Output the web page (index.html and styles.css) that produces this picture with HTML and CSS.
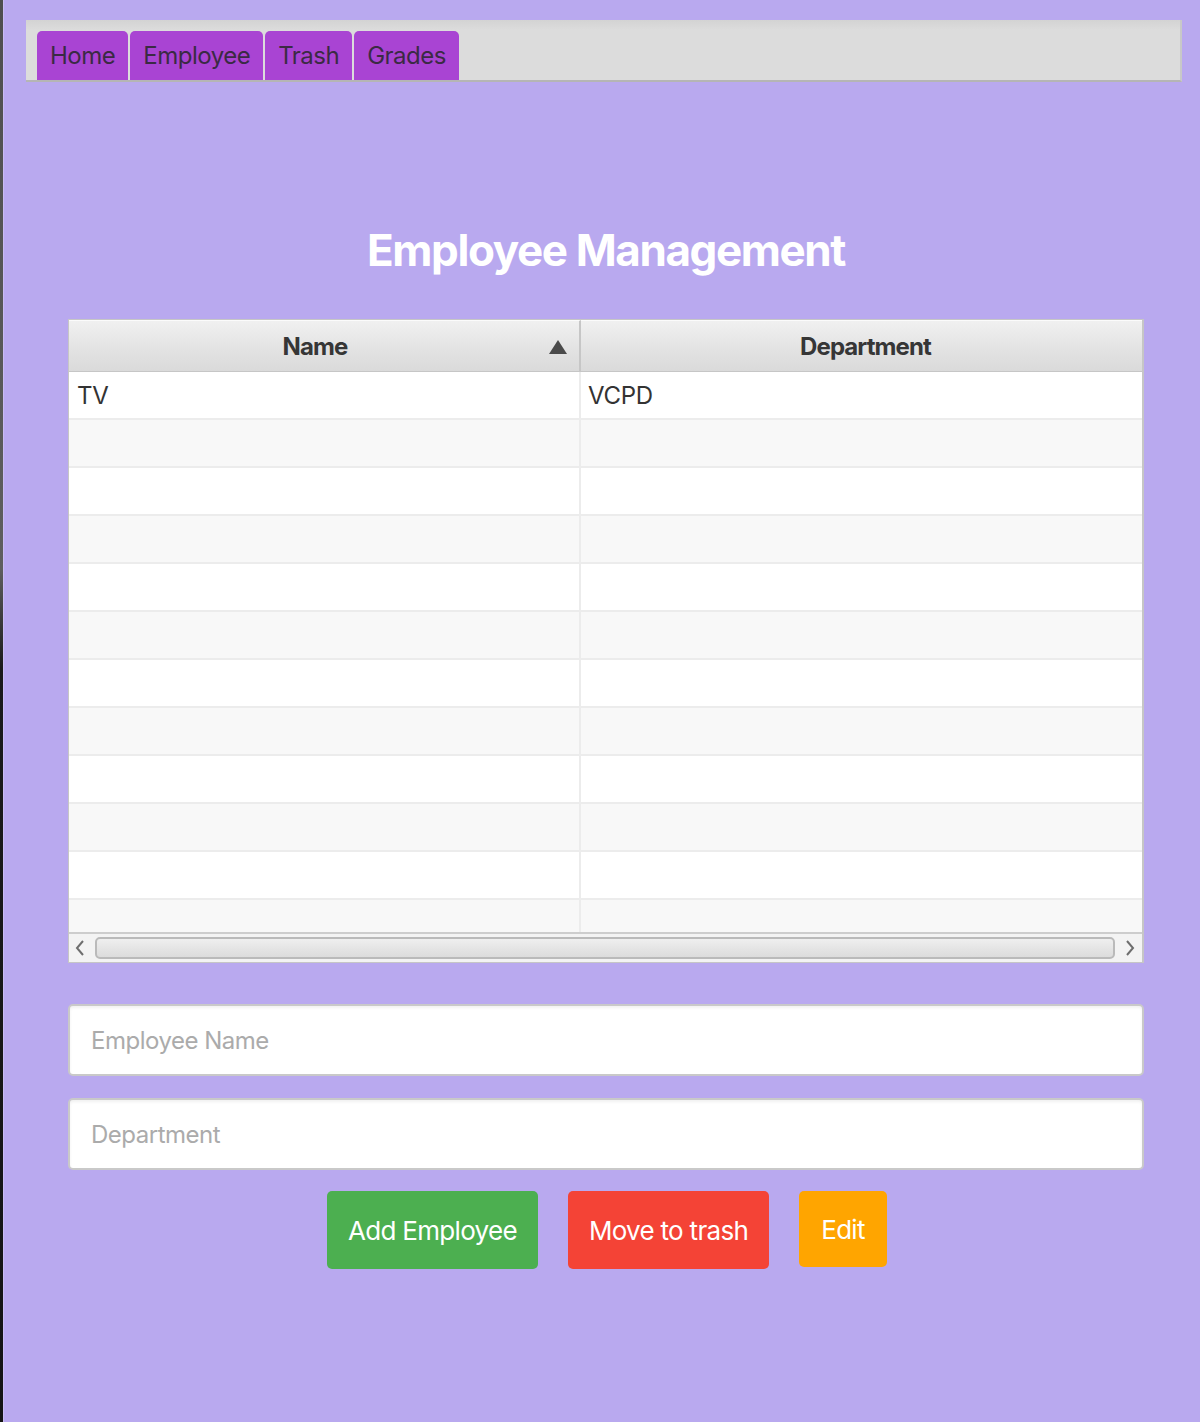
FILE: index.html
```html
<!DOCTYPE html>
<html lang="en">
<head>
<meta charset="utf-8">
<title>Employee Management</title>
<link rel="stylesheet" href="styles.css">
</head>
<body>
<div class="screen">
  <div class="edge"></div>
  <div class="app">
    <nav class="tabbar">
      <div class="tab">Home</div>
      <div class="tab">Employee</div>
      <div class="tab">Trash</div>
      <div class="tab">Grades</div>
    </nav>

    <main class="content">
      <h1 class="title">Employee Management</h1>

      <div class="table">
        <div class="thead">
          <div class="th th-name"><span class="th-label">Name</span><span class="sort"></span></div>
          <div class="th th-dept"><span class="th-label">Department</span></div>
        </div>
        <div class="tbody">
          <div class="row"><div class="cell c-name">TV</div><div class="cell c-dept">VCPD</div></div>
          <div class="row alt"><div class="cell c-name"></div><div class="cell c-dept"></div></div>
          <div class="row"><div class="cell c-name"></div><div class="cell c-dept"></div></div>
          <div class="row alt"><div class="cell c-name"></div><div class="cell c-dept"></div></div>
          <div class="row"><div class="cell c-name"></div><div class="cell c-dept"></div></div>
          <div class="row alt"><div class="cell c-name"></div><div class="cell c-dept"></div></div>
          <div class="row"><div class="cell c-name"></div><div class="cell c-dept"></div></div>
          <div class="row alt"><div class="cell c-name"></div><div class="cell c-dept"></div></div>
          <div class="row"><div class="cell c-name"></div><div class="cell c-dept"></div></div>
          <div class="row alt"><div class="cell c-name"></div><div class="cell c-dept"></div></div>
          <div class="row"><div class="cell c-name"></div><div class="cell c-dept"></div></div>
          <div class="row alt last"><div class="cell c-name"></div><div class="cell c-dept"></div></div>
        </div>
        <div class="hscroll">
          <svg class="arrow" width="12" height="18" viewBox="0 0 12 18"><path d="M9 2 L3 9 L9 16" fill="none" stroke="#6e6e6e" stroke-width="2"/></svg>
          <div class="track"></div>
          <svg class="arrow" width="12" height="18" viewBox="0 0 12 18"><path d="M3 2 L9 9 L3 16" fill="none" stroke="#6e6e6e" stroke-width="2"/></svg>
        </div>
      </div>

      <div class="form">
        <input class="field" type="text" placeholder="Employee Name">
        <input class="field" type="text" placeholder="Department">
      </div>

      <div class="actions">
        <button class="btn btn-add">Add Employee</button>
        <button class="btn btn-trash">Move to trash</button>
        <button class="btn btn-edit">Edit</button>
      </div>
    </main>
  </div>
</div>
</body>
</html>
```

FILE: styles.css
```css
* { box-sizing: border-box; }

html, body {
  margin: 0;
  padding: 0;
  height: 100%;
}

body {
  background: #b9a9ef;
  font-family: Inter, "Noto Sans", "Liberation Sans", sans-serif;
  color: #333;
}

.screen {
  display: flex;
  min-height: 1422px;
}

.edge {
  width: 4px;
  flex: 0 0 4px;
  background: linear-gradient(to bottom, #4e4e4e 0, #5e5e5e 40%, #1a1a1a 47%, #141414 100%);
  border-right: 1px solid #c9bcf2;
}

.app {
  flex: 1;
  padding-top: 20px;
}

/* tab bar */
.tabbar {
  margin: 0 18px 0 22px;
  height: 62px;
  background: linear-gradient(to bottom, #d3d3d3 0, #dcdcdc 10px, #dcdcdc 100%);
  border-bottom: 2px solid #b5b5b5;
  border-right: 2px solid #c8c8c8;
  padding: 11px 0 0 11px;
  display: flex;
  gap: 2px;
  align-items: flex-end;
}

.tab {
  height: 49px;
  background: #a944d3;
  border-radius: 5px 5px 0 0;
  padding: 0 13px;
  font-size: 24px;
  letter-spacing: -0.5px;
  color: #3b2a44;
  display: flex;
  align-items: center;
}

/* content */
.content {
  padding: 0 0 0 64px;
  width: 1140px;
}

.title {
  margin: 138px 0 39px;
  height: 60px;
  line-height: 60px;
  text-align: center;
  font-size: 44px;
  font-weight: 700;
  letter-spacing: -1.4px;
  color: #ffffff;
}

.table {
  width: 1076px;
  border: 1px solid #c6c6c6;
  border-right-width: 2px;
  background: #ffffff;
}

.thead {
  display: flex;
  height: 52px;
  background: linear-gradient(to bottom, #f1f1f1 0, #e2e2e2 60%, #dadada 100%);
  border-bottom: 1px solid #c6c6c6;
}

.th {
  display: flex;
  align-items: center;
  justify-content: center;
  font-size: 24px;
  font-weight: 700;
  letter-spacing: -0.9px;
  color: #363636;
  position: relative;
  border-top: 1px solid #fbfbfb;
}

.th-name {
  width: 512px;
  border-right: 2px solid #c6c6c6;
  padding-right: 18px;
}

.th-dept {
  flex: 1;
  padding-left: 8px;
}

.sort {
  position: absolute;
  right: 12px;
  top: 19px;
  width: 0;
  height: 0;
  border-left: 9px solid transparent;
  border-right: 9px solid transparent;
  border-bottom: 14px solid #4a4a4a;
}

.tbody {
  height: 560px;
  overflow: hidden;
}

.row {
  display: flex;
  height: 48px;
  border-bottom: 2px solid #ececec;
  background: #ffffff;
}

.row.alt {
  background: #f8f8f8;
}

.cell {
  font-size: 24px;
  color: #333;
  display: flex;
  align-items: center;
  padding-left: 8px;
  letter-spacing: -0.3px;
}

.c-name {
  width: 512px;
  border-right: 2px solid #ececec;
}

.c-dept {
  flex: 1;
  padding-left: 7px;
}

.hscroll {
  height: 30px;
  border-top: 2px solid #cdcdcd;
  background: #f3f3f3;
  display: flex;
  align-items: center;
  padding: 0 6px 0 5px;
  gap: 9px;
}

.track {
  flex: 1;
  height: 22px;
  border: 2px solid #bababa;
  border-radius: 5px;
  background: linear-gradient(to bottom, #efefef 0, #e3e3e3 60%, #dcdcdc 100%);
}

.arrow {
  flex: 0 0 12px;
}

/* form */
.form {
  margin-top: 41px;
  width: 1076px;
  display: flex;
  flex-direction: column;
  gap: 22px;
}

.field {
  height: 72px;
  border: 2px solid #c9c9c9;
  border-radius: 5px;
  background: #ffffff;
  box-shadow: inset 0 2px 3px rgba(0,0,0,0.06);
  padding: 0 0 0 21px;
  font-family: Inter, "Noto Sans", "Liberation Sans", sans-serif;
  font-size: 24px;
  letter-spacing: -0.5px;
  color: #333;
  outline: none;
}

.field::placeholder {
  color: #ababab;
}

/* buttons */
.actions {
  margin-top: 21px;
  width: 1076px;
  display: flex;
  justify-content: center;
  align-items: flex-start;
  gap: 30px;
  padding-left: 2px;
}

.btn {
  height: 78px;
  border: none;
  border-radius: 5px;
  color: #ffffff;
  font-family: Inter, "Noto Sans", "Liberation Sans", sans-serif;
  font-size: 26px;
  letter-spacing: -0.7px;
  padding: 0;
  white-space: nowrap;
}

.btn-add { background: #4caf50; width: 211px; }
.btn-trash { background: #f44336; width: 201px; }
.btn-edit { background: #ffa500; width: 88px; height: 76px; }
```
